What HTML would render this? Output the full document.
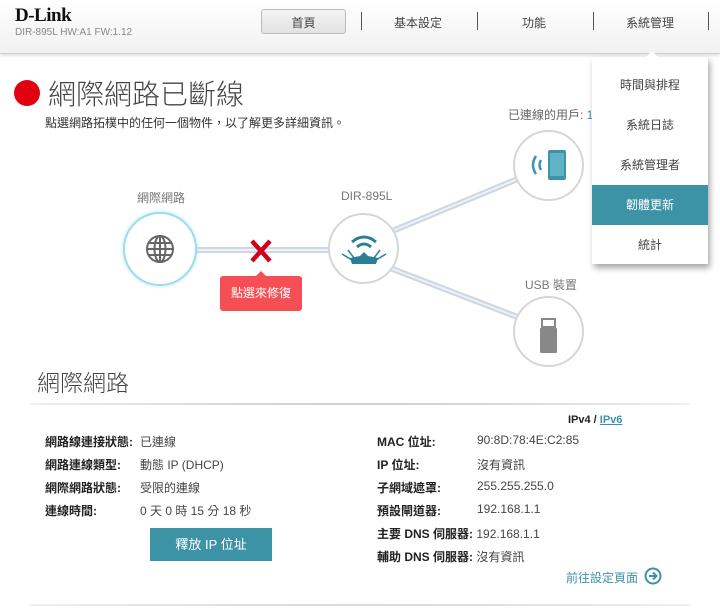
<!DOCTYPE html>
<html><head><meta charset="utf-8"><style>
*{margin:0;padding:0;box-sizing:border-box}
body{width:720px;height:608px;overflow:hidden;background:#fff;font-family:"Liberation Sans","Noto Sans CJK TC",sans-serif;color:#333;position:relative}
.abs{position:absolute}
.hdr{left:0;top:0;width:720px;height:54px;background:linear-gradient(#fff,#f1f1f1);border-bottom:1px solid #cfcfcf;box-shadow:0 2px 3px rgba(0,0,0,.12)}
.nav{font-size:12px;color:#444;text-align:center;top:14px}
.sep{width:1px;height:18px;background:#555;top:12px}
.circ{border-radius:50%;background:#fff;border:2px solid #d6d6d6}
.menu{left:592px;top:57px;width:116px;height:207px;background:#fff;box-shadow:2px 4px 6px rgba(0,0,0,.35);font-size:12px;color:#444}
.menu div{height:40px;line-height:40px;text-align:center}
.lbl{font-size:12px;font-weight:bold;color:#222}
.val{font-size:12px;color:#444}
</style></head><body>
<div class="abs hdr"></div>
<div class="abs" style="left:15px;top:5px;font-family:'Liberation Serif',serif;font-weight:bold;font-size:19px;color:#111;letter-spacing:-0.5px">D-Link</div>
<div class="abs" style="left:15px;top:27px;font-size:10px;color:#888">DIR-895L HW:A1 FW:1.12</div>
<div class="abs" style="left:261px;top:9px;width:85px;height:25px;border:1px solid #bbb;border-radius:3px;background:linear-gradient(#f4f4f4,#e2e2e2)"></div>
<div class="abs nav" style="left:261px;width:85px">首頁</div>
<div class="abs sep" style="left:361px"></div>
<div class="abs nav" style="left:370px;width:96px">基本設定</div>
<div class="abs sep" style="left:477px"></div>
<div class="abs nav" style="left:486px;width:96px">功能</div>
<div class="abs sep" style="left:593px"></div>
<div class="abs nav" style="left:602px;width:96px">系統管理</div>
<div class="abs sep" style="left:708px"></div>

<div class="abs" style="left:14px;top:80px;width:26px;height:26px;border-radius:50%;background:#e0000f"></div>
<div class="abs" style="left:48px;top:73px;font-size:28px;font-weight:300;color:#444">網際網路已斷線</div>
<div class="abs" style="left:45px;top:114px;font-size:12px;color:#333">點選網路拓樸中的任何一個物件，以了解更多詳細資訊。</div>
<div class="abs" style="left:508px;top:106px;font-size:12px;color:#666">已連線的用戶: <span style="color:#3d93a6">1</span></div>

<svg class="abs" style="left:0;top:0" width="720" height="400">
<g stroke="#cdd6e2" stroke-width="6"><line x1="190" y1="250" x2="330" y2="250"/><line x1="390" y1="232" x2="520" y2="178"/><line x1="390" y1="268" x2="520" y2="318"/></g>
<g stroke="#eef2f6" stroke-width="2"><line x1="190" y1="250" x2="330" y2="250"/><line x1="390" y1="232" x2="520" y2="178"/><line x1="390" y1="268" x2="520" y2="318"/></g>
<path d="M252 241 L270 261 M270 241 L252 261" stroke="#d0021b" stroke-width="4.5"/>
</svg>
<div class="abs" style="left:137px;top:189px;font-size:12px;color:#777">網際網路</div>
<div class="abs" style="left:341px;top:189px;font-size:12px;color:#777">DIR-895L</div>
<div class="abs" style="left:525px;top:276px;font-size:12px;color:#777">USB 裝置</div>
<div class="abs circ" style="left:123px;top:212px;width:74px;height:74px;border-color:#9ddcee;box-shadow:0 0 4px #b5e8f5"></div>
<svg class="abs" style="left:145px;top:234px" width="30" height="30" viewBox="0 0 30 30" fill="none" stroke="#666" stroke-width="2"><circle cx="15" cy="15" r="13"/><ellipse cx="15" cy="15" rx="5.5" ry="13"/><line x1="15" y1="2" x2="15" y2="28"/><line x1="2" y1="15" x2="28" y2="15"/><line x1="4" y1="9" x2="26" y2="9"/><line x1="4" y1="21" x2="26" y2="21"/></svg>
<div class="abs circ" style="left:328px;top:213px;width:71px;height:71px"></div>
<svg class="abs" style="left:340px;top:228px" width="48" height="40" viewBox="0 0 48 40" fill="none" stroke="#2a7f94" stroke-width="3"><path d="M12 14 Q24 4 36 14"/><path d="M17 19 Q24 13 31 19"/><path d="M2 26 L12 32 M46 26 L36 32 M8 22 L14 30 M40 22 L34 30" stroke-width="1.5"/><path d="M10 30 L20 28 L24 24 L28 28 L38 30 L36 36 L12 36 Z" fill="#2a7f94" stroke="none"/></svg>
<div class="abs" style="left:255px;top:271px;width:0;height:0;border-left:6px solid transparent;border-right:6px solid transparent;border-bottom:6px solid #f54f55"></div>
<div class="abs" style="left:220px;top:276px;width:82px;height:35px;background:#f54f55;border-radius:3px;color:#fff;font-size:12px;text-align:center;line-height:35px">點選來修復</div>
<div class="abs circ" style="left:513px;top:130px;width:71px;height:71px"></div>
<svg class="abs" style="left:526px;top:146px" width="46" height="40" viewBox="0 0 46 40"><path d="M10 10 Q4 19 10 28 M15 14 Q12 19 15 24" stroke="#3f93a8" stroke-width="2.5" fill="none"/><rect x="22" y="4" width="18" height="30" rx="2" fill="#3f93a8"/><rect x="24" y="7" width="14" height="23" fill="#5eb3c6"/></svg>
<div class="abs circ" style="left:513px;top:296px;width:71px;height:71px"></div>
<div class="abs" style="left:541px;top:318px;width:15px;height:10px;border:2px solid #888;background:#fff"></div>
<div class="abs" style="left:540px;top:328px;width:17px;height:25px;background:#888;border-radius:1px"></div>

<div class="abs menu"><div style="height:8px"></div><div>時間與排程</div><div>系統日誌</div><div>系統管理者</div><div style="background:#3d93a6;color:#fff">韌體更新</div><div>統計</div></div>
<div class="abs" style="left:645px;top:51px;width:0;height:0;border-left:7px solid transparent;border-right:7px solid transparent;border-bottom:7px solid #fff"></div>

<div class="abs" style="left:37px;top:364px;font-size:23px;font-weight:300;color:#444">網際網路</div>
<div class="abs" style="left:30px;top:403px;width:660px;height:2px;background:radial-gradient(ellipse at center,#bbb,#eee 80%,transparent)"></div>
<div class="abs" style="left:568px;top:414px;font-size:11px;font-weight:bold;color:#222">IPv4 / <span style="color:#3d93a6;text-decoration:underline">IPv6</span></div>
<div class="abs lbl" style="left:45px;top:433px">網路線連接狀態:</div><div class="abs val" style="left:140px;top:433px">已連線</div>
<div class="abs lbl" style="left:45px;top:456px">網路連線類型:</div><div class="abs val" style="left:140px;top:456px">動態 IP (DHCP)</div>
<div class="abs lbl" style="left:45px;top:479px">網際網路狀態:</div><div class="abs val" style="left:140px;top:479px">受限的連線</div>
<div class="abs lbl" style="left:45px;top:502px">連線時間:</div><div class="abs val" style="left:140px;top:502px">0 天 0 時 15 分 18 秒</div>
<div class="abs" style="left:150px;top:528px;width:122px;height:33px;background:#3d93a6;color:#fff;font-size:13px;text-align:center;line-height:33px">釋放 IP 位址</div>
<div class="abs lbl" style="left:377px;top:433px">MAC 位址:</div><div class="abs val" style="left:477px;top:433px">90:8D:78:4E:C2:85</div>
<div class="abs lbl" style="left:377px;top:456px">IP 位址:</div><div class="abs val" style="left:477px;top:456px">沒有資訊</div>
<div class="abs lbl" style="left:377px;top:479px">子網域遮罩:</div><div class="abs val" style="left:477px;top:479px">255.255.255.0</div>
<div class="abs lbl" style="left:377px;top:502px">預設閘道器:</div><div class="abs val" style="left:477px;top:502px">192.168.1.1</div>
<div class="abs lbl" style="left:377px;top:525px">主要 DNS 伺服器: <span class="val" style="font-weight:normal">192.168.1.1</span></div>
<div class="abs lbl" style="left:377px;top:548px">輔助 DNS 伺服器: <span class="val" style="font-weight:normal">沒有資訊</span></div>
<div class="abs" style="left:566px;top:569px;font-size:12px;color:#3d93a6">前往設定頁面</div>
<svg class="abs" style="left:644px;top:567px" width="18" height="18" viewBox="0 0 18 18" fill="none" stroke="#3d93a6" stroke-width="2"><circle cx="9" cy="9" r="7.5"/><path d="M5 9 H12 M9 5.5 L12.5 9 L9 12.5"/></svg>
<div class="abs" style="left:30px;top:604px;width:660px;height:2px;background:radial-gradient(ellipse at center,#ccc,#eee 80%,transparent)"></div>
</body></html>
